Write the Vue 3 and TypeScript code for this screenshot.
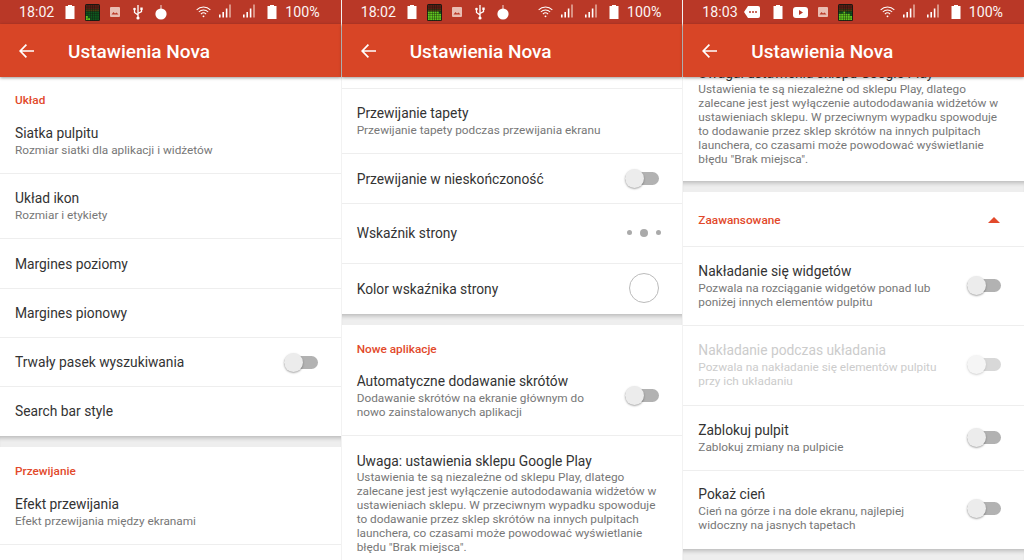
<script setup lang="ts">
type Row = { kind: 'gap' | 'head' | 'item'; title?: string; sub?: string; h: number; ctl?: string; off?: boolean; last?: boolean; note?: boolean; accent?: boolean; low?: boolean; high?: boolean; higher?: boolean }
type Panel = { time: string; scroll: number; icons: string[]; pad: number; rows: Row[] }
const panels: Panel[] = [
  { time: '18:02', scroll: 0, pad: 0, icons: ['batt', 'eq1', 'img', 'usb', 'bomb'], rows: [
    { kind: 'head', title: 'Układ', h: 31 },
    { kind: 'item', title: 'Siatka pulpitu', sub: 'Rozmiar siatki dla aplikacji i widżetów', h: 66 },
    { kind: 'item', title: 'Układ ikon', sub: 'Rozmiar i etykiety', h: 65, high: true },
    { kind: 'item', title: 'Margines poziomy', h: 50 },
    { kind: 'item', title: 'Margines pionowy', h: 49 },
    { kind: 'item', title: 'Trwały pasek wyszukiwania', h: 49, ctl: 'toggle' },
    { kind: 'item', title: 'Search bar style', h: 49, last: true, high: true },
    { kind: 'gap', h: 11 },
    { kind: 'head', title: 'Przewijanie', h: 32 },
    { kind: 'item', title: 'Efekt przewijania', sub: 'Efekt przewijania między ekranami', h: 66 },
  ] },
  { time: '18:02', scroll: 0, pad: 11, icons: ['batt', 'eq2', 'img', 'usb', 'bomb'], rows: [
    { kind: 'item', title: 'Przewijanie tapety', sub: 'Przewijanie tapety podczas przewijania ekranu', h: 66, high: true },
    { kind: 'item', title: 'Przewijanie w nieskończoność', h: 50, ctl: 'toggle' },
    { kind: 'item', title: 'Wskaźnik strony', h: 60, ctl: 'dots', high: true },
    { kind: 'item', title: 'Kolor wskaźnika strony', h: 50, ctl: 'circle', last: true },
    { kind: 'gap', h: 11 },
    { kind: 'head', title: 'Nowe aplikacje', h: 31 },
    { kind: 'item', title: 'Automatyczne dodawanie skrótów', sub: 'Dodawanie skrótów na ekranie głównym do nowo zainstalowanych aplikacji', h: 80, ctl: 'toggle' },
    { kind: 'item', note: true, title: 'Uwaga: ustawienia sklepu Google Play', sub: 'Ustawienia te są niezależne od sklepu Play, dlatego zalecane jest jest wyłączenie autododawania widżetów w ustawieniach sklepu. W przeciwnym wypadku spowoduje to dodawanie przez sklep skrótów na innych pulpitach launchera, co czasami może powodować wyświetlanie błędu "Brak miejsca".', h: 130 },
  ] },
  { time: '18:03', scroll: -13, pad: 0, icons: ['msg', 'batt', 'yt', 'img', 'eq3'], rows: [
    { kind: 'item', note: true, title: 'Uwaga: ustawienia sklepu Google Play', sub: 'Ustawienia te są niezależne od sklepu Play, dlatego zalecane jest jest wyłączenie autododawania widżetów w ustawieniach sklepu. W przeciwnym wypadku spowoduje to dodawanie przez sklep skrótów na innych pulpitach launchera, co czasami może powodować wyświetlanie błędu "Brak miejsca".', h: 117, last: true },
    { kind: 'gap', h: 11 },
    { kind: 'item', accent: true, title: 'Zaawansowane', h: 55, ctl: 'caret', low: true },
    { kind: 'item', title: 'Nakładanie się widgetów', sub: 'Pozwala na rozciąganie widgetów ponad lub poniżej innych elementów pulpitu', h: 79, ctl: 'toggle', high: true },
    { kind: 'item', off: true, title: 'Nakładanie podczas układania', sub: 'Pozwala na nakładanie się elementów pulpitu przy ich układaniu', h: 80, ctl: 'toggle', high: true },
    { kind: 'item', title: 'Zablokuj pulpit', sub: 'Zablokuj zmiany na pulpicie', h: 65, ctl: 'toggle', high: true },
    { kind: 'item', title: 'Pokaż cień', sub: 'Cień na górze i na dole ekranu, najlepiej widoczny na jasnych tapetach', h: 78, ctl: 'toggle', last: true, higher: true },
    { kind: 'gap', h: 11 },
  ] },
]

const levels: Record<string, number[]> = {
  eq1: [2, 1, 0, 0, 0, 0],
  eq2: [4, 5, 5, 4, 5, 3],
  eq3: [3, 3, 4, 3, 3, 2],
}
function cells(name: string) {
  const out: { x: number; y: number; fill: string }[] = []
  levels[name].forEach((lvl, c) => {
    for (let r = 0; r < 7; r++) {
      const lit = 7 - r <= lvl
      const fill = r < 2 ? '#5c1c12' : r === 2 ? '#4a4010' : lit ? '#5fc81e' : '#0c5a1e'
      out.push({ x: 0.9 + c * 2.25, y: 1 + r * 2.2, fill })
    }
  })
  return out
}
</script>

<template>
  <div class="screen">
    <section v-for="(p, i) in panels" :key="i" class="phone">
      <div class="status">
        <span class="time">{{ p.time }}</span>
        <div class="left-icons">
          <template v-for="ic in p.icons" :key="ic">
            <svg v-if="ic === 'batt'" class="ic" width="10" height="14" viewBox="0 0 10 14"><path d="M3 0h4v1h2.5v13H.5V1H3z" fill="#fff" /></svg>
            <svg v-else-if="ic.startsWith('eq')" class="ic" width="15" height="17" viewBox="0 0 15 17">
              <rect width="15" height="17" rx="1.5" fill="#1a1712" />
              <rect v-for="(c, k) in cells(ic)" :key="k" :x="c.x" :y="c.y" width="1.9" height="1.9" :fill="c.fill" />
            </svg>
            <svg v-else-if="ic === 'img'" class="ic" width="10" height="10" viewBox="0 0 10 10"><rect width="10" height="10" rx="1" fill="#e9bdb3" /><path d="M1.5 7.5l2-2.5 1.5 1.5 1.5-1 2 2z" fill="#b93827" /></svg>
            <svg v-else-if="ic === 'usb'" class="ic ic-usb" width="10" height="15" viewBox="0 0 10 15"><path d="M5 0v13M5 10L1.5 7.5V5M5 8.5L8.5 6.5V4" stroke="#fff" stroke-width="1.3" fill="none" /><circle cx="5" cy="13" r="1.6" fill="#fff" /><rect x="7.3" y="2.5" width="2.4" height="2.4" fill="#fff" /><circle cx="1.5" cy="4" r="1.3" fill="#fff" /></svg>
            <svg v-else-if="ic === 'bomb'" class="ic ic-bomb" width="12" height="16" viewBox="0 0 12 16"><circle cx="6" cy="10" r="5.6" fill="#fff" /><path d="M5.6 1h.8v5h-.8z" fill="#fff" /></svg>
            <svg v-else-if="ic === 'msg'" class="ic ic-msg" width="16" height="12" viewBox="0 0 16 12"><path d="M4 0h10a2 2 0 0 1 2 2v8a2 2 0 0 1-2 2H4L0 6z" fill="#fff" /><circle cx="6" cy="6" r="1" fill="#b93827" /><circle cx="9" cy="6" r="1" fill="#b93827" /><circle cx="12" cy="6" r="1" fill="#b93827" /></svg>
            <svg v-else-if="ic === 'yt'" class="ic" width="15" height="11" viewBox="0 0 15 11"><rect width="15" height="11" rx="3" fill="#fff" /><path d="M6 3l4 2.5L6 8z" fill="#b93827" /></svg>
          </template>
        </div>
        <div class="right-icons">
          <svg width="15" height="12" viewBox="0 0 16 12" fill="none" stroke="#fff" stroke-width="1.1"><path d="M.7 3.7a10.5 10.5 0 0 1 14.6 0M3 6a7.2 7.2 0 0 1 10 0M5.2 8.2a4 4 0 0 1 5.6 0" /><circle cx="8" cy="10.6" r="1" fill="#fff" stroke="none" /></svg>
          <svg v-for="s in 2" :key="s" class="sig" width="16" height="14" viewBox="0 0 16 14"><rect x="0" y="10.5" width="1.6" height="3" fill="#fff" /><rect x="3.4" y="8" width="1.6" height="5.5" fill="#fff" /><rect x="6.8" y="4.5" width="1.6" height="9" fill="#fff" /><rect x="10.2" y="0.5" width="1.6" height="13" fill="#e3a99b" /></svg>
          <svg width="10" height="14" viewBox="0 0 10 14"><path d="M3 0h4v1h2.5v13H.5V1H3z" fill="#fff" /></svg>
          <span class="pct">100%</span>
        </div>
      </div>
      <header class="appbar">
        <svg class="back" width="15" height="14" viewBox="0 0 15 14" fill="none" stroke="#fff" stroke-width="1.7"><path d="M15 7H1.4M7.4 .7L1.2 7l6.2 6.3" /></svg>
        <h1>Ustawienia Nova</h1>
      </header>
      <div class="list">
        <div class="scroller" :style="{ marginTop: p.scroll + 'px', paddingTop: p.pad + 'px' }">
          <template v-for="(r, j) in p.rows" :key="j">
            <div v-if="r.kind === 'gap'" class="gap" :style="{ height: r.h + 'px' }"></div>
            <div v-else-if="r.kind === 'head'" class="head" :style="{ height: r.h + 'px' }">{{ r.title }}</div>
            <div v-else :class="['row', { last: r.last, first: p.pad && j === 0, dim: r.off, note: r.note, low: r.low, high: r.high, higher: r.higher }]" :style="{ height: r.h + 'px' }">
              <div class="text">
                <div :class="['title', { accent: r.accent }]">{{ r.title }}</div>
                <div v-if="r.sub" class="sub">{{ r.sub }}</div>
              </div>
              <span v-if="r.ctl === 'toggle'" class="toggle"><i></i></span>
              <span v-else-if="r.ctl === 'dots'" class="dots"><i></i><i class="big"></i><i></i></span>
              <span v-else-if="r.ctl === 'circle'" class="circle"></span>
              <span v-else-if="r.ctl === 'caret'" class="caret"></span>
            </div>
          </template>
        </div>
      </div>
    </section>
  </div>
</template>

<style scoped>
.screen { display: flex; width: 1024px; height: 560px; overflow: hidden; gap: 1px; background: #f2f2f2; font-family: Roboto, "Liberation Sans", sans-serif; }
.phone { flex: 1 1 0; min-width: 0; display: flex; flex-direction: column; height: 560px; background: #fff; }
.status { height: 24px; flex: none; background: #b93827; color: #fff; display: flex; align-items: center; padding: 0 21px 0 19px; }
.time { font-size: 14.2px; width: 46px; flex: none; opacity: .95; }
.left-icons { display: flex; align-items: center; gap: 10px; flex: 1; }
.ic { display: block; flex: none; }
.ic-usb { margin-left: 3px; }
.ic-bomb { margin-left: 2px; }
.ic-msg { margin-left: -4px; margin-right: 3px; }
.right-icons { display: flex; align-items: center; gap: 8px; }
.sig { margin-bottom: 2px; }
.pct { font-size: 14.2px; opacity: .95; }
.appbar { height: 53px; flex: none; background: #d84526; display: flex; align-items: center; padding-left: 19px; position: relative; z-index: 2; box-shadow: 0 1px 3px rgba(0,0,0,.4); }
.appbar h1 { margin: 0 0 0 34px; padding-top: 1px; font-size: 19px; font-weight: 500; color: #fff; }
.back { flex: none; }
.list { flex: 1; overflow: hidden; min-height: 0; }
.gap { background: #eeeeee; box-shadow: inset 0 5px 4px -3px rgba(0,0,0,.22); }
.head { box-sizing: border-box; padding: 16px 15px 0; font-size: 11.8px; font-weight: 500; color: #e2492b; line-height: 14px; }
.gap + .head { padding-top: 17px; }
.row { box-sizing: border-box; display: flex; align-items: center; padding: 0 15px; gap: 24px; border-bottom: 1px solid #eeeeee; }
.row.low { padding-top: 2px; }
.row.high { padding-bottom: 2px; }
.row.higher { padding-bottom: 4px; }
.row.last { border-bottom: none; }
.row.first { border-top: 1px solid #eeeeee; }
.row.note { align-items: flex-start; padding-top: 16px; }
.scroller > .row.note:first-child { padding-top: 0; }
.text { flex: 1; min-width: 0; }
.title { font-size: 13.8px; line-height: 18px; color: #333; }
.title.accent { font-size: 11.8px; font-weight: 500; color: #e2492b; }
.sub { font-size: 11.8px; line-height: 14px; color: #777; margin-top: 1px; }
.note .sub { margin-top: 0; }
.dim .title, .dim .sub { color: #ccc; }
.dim .toggle { opacity: .5; }
.toggle { position: relative; flex: none; width: 34px; height: 13px; margin-right: 8px; background: #b2b2b2; border-radius: 7px; }
.toggle i { position: absolute; left: 0; top: -3px; width: 19px; height: 19px; border-radius: 50%; background: #ececec; box-shadow: 0 1px 2px rgba(0,0,0,.35); }
.dots { flex: none; display: flex; align-items: center; gap: 8px; margin-right: 6px; }
.dots i { width: 5px; height: 5px; border-radius: 50%; background: #aaa; }
.dots i.big { width: 8px; height: 8px; }
.circle { flex: none; width: 30px; height: 30px; box-sizing: border-box; border: 1.5px solid #bbb; border-radius: 50%; margin: -2px 8px 0 0; }
.caret { flex: none; width: 0; height: 0; border-left: 6px solid transparent; border-right: 6px solid transparent; border-bottom: 6px solid #e2492b; margin-right: 9px; }
</style>
